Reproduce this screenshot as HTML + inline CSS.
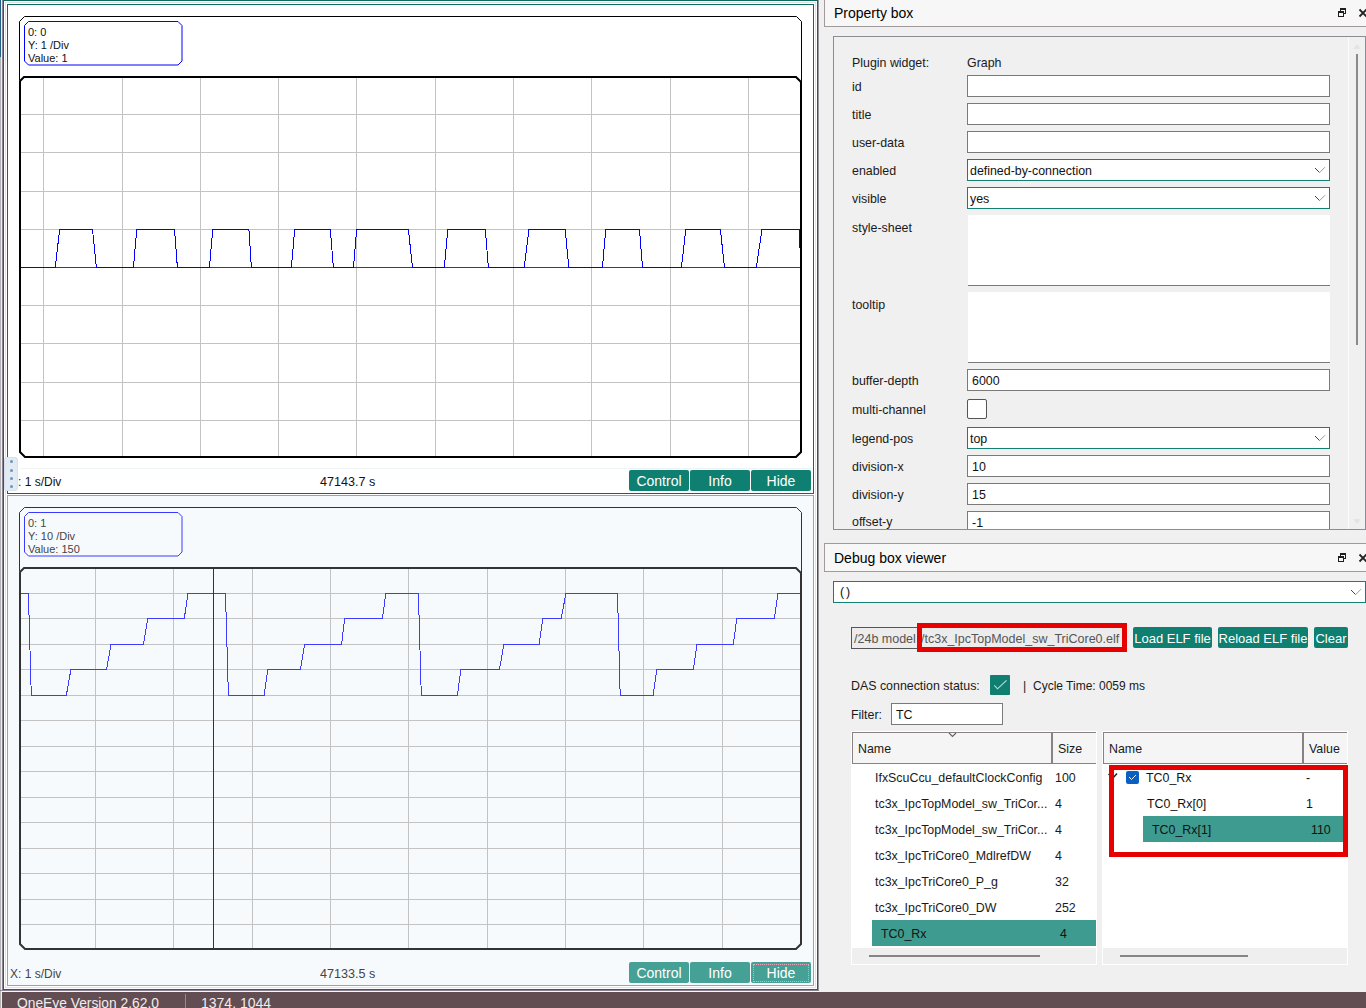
<!DOCTYPE html>
<html><head><meta charset="utf-8"><style>
*{margin:0;padding:0;box-sizing:border-box}
html,body{width:1366px;height:1008px;overflow:hidden;background:#f0f0f0;position:relative;font-family:"Liberation Sans",sans-serif}
div,span,svg{position:absolute}
.t{line-height:1;white-space:nowrap}
</style></head><body><div style="left:0px;top:0px;width:1px;height:57px;background:#1f5f86"></div>
<div style="left:0px;top:57px;width:1px;height:951px;background:#b4b4b4"></div>
<div style="left:1px;top:0px;width:1px;height:992px;background:#f2eeee"></div>
<div style="left:2px;top:0px;width:1px;height:991px;background:#8c8494"></div>
<div style="left:3px;top:0px;width:815px;height:990px;border:1px solid #0f6a5e;background:#ffffff"></div>
<div style="left:5px;top:2px;width:811px;height:986px;border:1px solid #e2e2e2"></div>
<div style="left:818px;top:0px;width:1px;height:992px;background:#9c98a0"></div>
<div style="left:0px;top:990px;width:819px;height:1px;background:#8c8494"></div>
<div style="left:1px;top:991px;width:818px;height:1px;background:#f6f6f6"></div>
<div style="left:7px;top:4px;width:807px;height:490px;border:1px solid #0f6a5e;background:#ffffff"></div>
<svg style="left:0;top:0" width="1366" height="1008" viewBox="0 0 1366 1008"><path d="M19.5 21.5 L24.5 16.5 L796.5 16.5 L801.5 21.5 L801.5 82" fill="none" stroke="#000000" stroke-width="1"/><path d="M19.5 21.5 L19.5 80" fill="none" stroke="#000000" stroke-width="1"/><path d="M24.5 25.5 L28.5 21.5 L178 21.5 L182 25.5 L182 61 L178 65 L28.5 65 L24.5 61 Z" fill="none" stroke="#0000ff" stroke-width="1"/><line x1="43.5" y1="77" x2="43.5" y2="457" stroke="#c3c3c3" stroke-width="1"/><line x1="122.5" y1="77" x2="122.5" y2="457" stroke="#c3c3c3" stroke-width="1"/><line x1="200.5" y1="77" x2="200.5" y2="457" stroke="#c3c3c3" stroke-width="1"/><line x1="278.5" y1="77" x2="278.5" y2="457" stroke="#c3c3c3" stroke-width="1"/><line x1="356.5" y1="77" x2="356.5" y2="457" stroke="#c3c3c3" stroke-width="1"/><line x1="435.5" y1="77" x2="435.5" y2="457" stroke="#c3c3c3" stroke-width="1"/><line x1="513.5" y1="77" x2="513.5" y2="457" stroke="#c3c3c3" stroke-width="1"/><line x1="591.5" y1="77" x2="591.5" y2="457" stroke="#c3c3c3" stroke-width="1"/><line x1="670.5" y1="77" x2="670.5" y2="457" stroke="#c3c3c3" stroke-width="1"/><line x1="748.5" y1="77" x2="748.5" y2="457" stroke="#c3c3c3" stroke-width="1"/><line x1="21" y1="114.5" x2="800" y2="114.5" stroke="#c3c3c3" stroke-width="1"/><line x1="21" y1="152.5" x2="800" y2="152.5" stroke="#c3c3c3" stroke-width="1"/><line x1="21" y1="191.5" x2="800" y2="191.5" stroke="#c3c3c3" stroke-width="1"/><line x1="21" y1="229.5" x2="800" y2="229.5" stroke="#c3c3c3" stroke-width="1"/><line x1="21" y1="267.5" x2="800" y2="267.5" stroke="#c3c3c3" stroke-width="1"/><line x1="21" y1="305.5" x2="800" y2="305.5" stroke="#c3c3c3" stroke-width="1"/><line x1="21" y1="343.5" x2="800" y2="343.5" stroke="#c3c3c3" stroke-width="1"/><line x1="21" y1="382.5" x2="800" y2="382.5" stroke="#c3c3c3" stroke-width="1"/><line x1="21" y1="420.5" x2="800" y2="420.5" stroke="#c3c3c3" stroke-width="1"/><line x1="21" y1="267.5" x2="800" y2="267.5" stroke="#00604f" stroke-width="1"/><polyline points="21.0,267.5 55.3,267.5 59.6,229.5 92.5,229.5 96.4,267.5 133.4,267.5 136.8,229.5 174.5,229.5 177.4,267.5 209.4,267.5 212.8,229.5 248.9,229.5 251.4,267.5 291.4,267.5 294.7,229.5 330.3,229.5 333.4,267.5 353.5,267.5 356.6,229.5 408.4,229.5 412.5,267.5 444.3,267.5 447.8,229.5 485.3,229.5 488.4,267.5 524.2,267.5 528.9,229.5 565.2,229.5 568.8,267.5 602.4,267.5 605.8,229.5 639.5,229.5 642.5,267.5 681.4,267.5 685.8,229.5 720.4,229.5 724.5,267.5 756.3,267.5 762.0,229.5 799.5,229.5 799.5,248.0" fill="none" stroke="#0000ff" stroke-width="1" shape-rendering="crispEdges"/><path d="M20 81 L24 77 L796 77 L801 82 L801 452 L796 457 L25 457 L20 452 Z" fill="none" stroke="#000000" stroke-width="2"/></svg>
<span class="t" style="left:28px;top:27px;font-size:11px;color:#111111;">0: 0</span>
<span class="t" style="left:28px;top:40px;font-size:11px;color:#111111;">Y: 1 /Div</span>
<span class="t" style="left:28px;top:53px;font-size:11px;color:#111111;">Value: 1</span>
<div style="left:20px;top:468px;width:793px;height:1px;background:#eef3f3"></div>
<span class="t" style="left:10px;top:476px;font-size:12px;color:#111111;">X: 1 s/Div</span>
<span class="t" style="left:320px;top:476px;font-size:12.6px;color:#111111;">47143.7 s</span>
<div style="left:629px;top:470px;width:60px;height:21px;background:#0e7f70;border-radius:2px;color:#fff;font-size:14px;line-height:1;padding-top:4px;text-align:center">Control</div>
<div style="left:690px;top:470px;width:60px;height:21px;background:#0e7f70;border-radius:2px;color:#fff;font-size:14px;line-height:1;padding-top:4px;text-align:center">Info</div>
<div style="left:751px;top:470px;width:60px;height:21px;background:#0e7f70;border-radius:2px;color:#fff;font-size:14px;line-height:1;padding-top:4px;text-align:center">Hide</div>
<div style="left:4px;top:457px;width:14px;height:34px;background:#e2eaf3;border:1px solid #d8e0ea;border-radius:3px"></div>
<div style="left:9.5px;top:460.1px;width:3px;height:3px;border-radius:50%;background:#6e96bc"></div>
<div style="left:9.5px;top:468.6px;width:3px;height:3px;border-radius:50%;background:#6e96bc"></div>
<div style="left:9.5px;top:476.7px;width:3px;height:3px;border-radius:50%;background:#6e96bc"></div>
<div style="left:9.5px;top:484.8px;width:3px;height:3px;border-radius:50%;background:#6e96bc"></div>
<div style="left:7px;top:495px;width:807px;height:491px;border:1px solid #7ba6e9;background:#f7fafd"></div>
<svg style="left:0;top:0" width="1366" height="1008" viewBox="0 0 1366 1008"><path d="M19.5 512.5 L24.5 507.5 L796.5 507.5 L801.5 512.5 L801.5 573" fill="none" stroke="#333333" stroke-width="1"/><path d="M19.5 512.5 L19.5 571" fill="none" stroke="#333333" stroke-width="1"/><path d="M24.5 516.5 L28.5 512.5 L178 512.5 L182 516.5 L182 552 L178 556 L28.5 556 L24.5 552 Z" fill="none" stroke="#3a3aff" stroke-width="1"/><line x1="95.5" y1="568" x2="95.5" y2="948" stroke="#c3c3c3" stroke-width="1"/><line x1="173.5" y1="568" x2="173.5" y2="948" stroke="#c3c3c3" stroke-width="1"/><line x1="252.5" y1="568" x2="252.5" y2="948" stroke="#c3c3c3" stroke-width="1"/><line x1="330.5" y1="568" x2="330.5" y2="948" stroke="#c3c3c3" stroke-width="1"/><line x1="408.5" y1="568" x2="408.5" y2="948" stroke="#c3c3c3" stroke-width="1"/><line x1="487.5" y1="568" x2="487.5" y2="948" stroke="#c3c3c3" stroke-width="1"/><line x1="565.5" y1="568" x2="565.5" y2="948" stroke="#c3c3c3" stroke-width="1"/><line x1="643.5" y1="568" x2="643.5" y2="948" stroke="#c3c3c3" stroke-width="1"/><line x1="722.5" y1="568" x2="722.5" y2="948" stroke="#c3c3c3" stroke-width="1"/><line x1="21" y1="593.5" x2="800" y2="593.5" stroke="#c3c3c3" stroke-width="1"/><line x1="21" y1="618.5" x2="800" y2="618.5" stroke="#c3c3c3" stroke-width="1"/><line x1="21" y1="644.5" x2="800" y2="644.5" stroke="#c3c3c3" stroke-width="1"/><line x1="21" y1="669.5" x2="800" y2="669.5" stroke="#c3c3c3" stroke-width="1"/><line x1="21" y1="695.5" x2="800" y2="695.5" stroke="#c3c3c3" stroke-width="1"/><line x1="21" y1="720.5" x2="800" y2="720.5" stroke="#c3c3c3" stroke-width="1"/><line x1="21" y1="746.5" x2="800" y2="746.5" stroke="#c3c3c3" stroke-width="1"/><line x1="21" y1="771.5" x2="800" y2="771.5" stroke="#c3c3c3" stroke-width="1"/><line x1="21" y1="797.5" x2="800" y2="797.5" stroke="#c3c3c3" stroke-width="1"/><line x1="21" y1="822.5" x2="800" y2="822.5" stroke="#c3c3c3" stroke-width="1"/><line x1="21" y1="848.5" x2="800" y2="848.5" stroke="#c3c3c3" stroke-width="1"/><line x1="21" y1="873.5" x2="800" y2="873.5" stroke="#c3c3c3" stroke-width="1"/><line x1="21" y1="899.5" x2="800" y2="899.5" stroke="#c3c3c3" stroke-width="1"/><line x1="21" y1="924.5" x2="800" y2="924.5" stroke="#c3c3c3" stroke-width="1"/><polyline points="21.0,593.5 28.4,593.5 31.3,695.5 66.3,695.5 70.9,669.5 106.5,669.5 111.0,644.5 143.4,644.5 147.8,618.5 184.3,618.5 187.9,593.5 225.5,593.5 228.4,695.5 264.1,695.5 267.8,669.5 300.4,669.5 304.7,644.5 341.6,644.5 344.6,618.5 382.4,618.5 385.8,593.5 418.4,593.5 421.3,695.5 457.4,695.5 460.9,669.5 499.4,669.5 503.9,644.5 539.2,644.5 542.7,618.5 561.2,618.5 565.9,593.5 617.5,593.5 620.2,695.5 653.2,695.5 656.7,669.5 693.4,669.5 697.0,644.5 733.3,644.5 736.8,618.5 774.3,618.5 778.0,593.5 800.0,593.5" fill="none" stroke="#3c3cff" stroke-width="1" shape-rendering="crispEdges"/><line x1="213.5" y1="568" x2="213.5" y2="948" stroke="#333" stroke-width="1"/><path d="M20 572 L24 568 L796 568 L801 573 L801 944 L796 949 L25 949 L20 944 Z" fill="none" stroke="#333333" stroke-width="2"/></svg>
<span class="t" style="left:28px;top:518px;font-size:11px;color:#444444;">0: 1</span>
<span class="t" style="left:28px;top:531px;font-size:11px;color:#444444;">Y: 10 /Div</span>
<span class="t" style="left:28px;top:544px;font-size:11px;color:#444444;">Value: 150</span>
<span class="t" style="left:10px;top:968px;font-size:12px;color:#444444;">X: 1 s/Div</span>
<span class="t" style="left:320px;top:968px;font-size:12.6px;color:#444444;">47133.5 s</span>
<div style="left:629px;top:962px;width:60px;height:21px;background:#45a096;border-radius:2px;color:#fff;font-size:14px;line-height:1;padding-top:4px;text-align:center">Control</div>
<div style="left:690px;top:962px;width:60px;height:21px;background:#45a096;border-radius:2px;color:#fff;font-size:14px;line-height:1;padding-top:4px;text-align:center">Info</div>
<div style="left:751px;top:962px;width:60px;height:21px;background:#45a096;border-radius:2px;color:#fff;font-size:14px;line-height:1;padding-top:4px;text-align:center">Hide</div>
<div style="left:753px;top:964px;width:56px;height:18px;border:1px dotted #e8a8b8"></div>
<div style="left:824px;top:-1px;width:547px;height:28px;border:1px solid #a09a9a;background:#f7f7f7"></div>
<span class="t" style="left:834px;top:6px;font-size:14px;color:#000;">Property box</span>
<svg style="left:1338px;top:8px" width="8" height="9" shape-rendering="crispEdges"><g fill="#1e1e1e"><rect x="2" y="0" width="6" height="2"/><rect x="7" y="0" width="1" height="6"/><rect x="6" y="5" width="2" height="1"/><rect x="2" y="0" width="1" height="3"/><rect x="0" y="3" width="6" height="2"/><rect x="0" y="3" width="1" height="6"/><rect x="5" y="3" width="1" height="6"/><rect x="0" y="8" width="6" height="1"/></g></svg>
<svg style="left:1358px;top:8px" width="10" height="10" viewBox="0 0 10 10"><path d="M1.5 1.5 L8.5 8.5 M8.5 1.5 L1.5 8.5" stroke="#222" stroke-width="1.8"/></svg>
<div style="left:833px;top:36px;width:533px;height:494px;border:1px solid #8a8d94;background:#f0f0f0"></div>
<div style="left:1348px;top:37px;width:17px;height:492px;background:#f0f0f0;border-left:1px solid #fcfcfc"></div>
<div style="left:1356px;top:54px;width:2px;height:291px;background:#8a8a8a"></div>
<svg style="left:1350px;top:40px" width="14" height="12"><path d="M3 9 L7 4 L11 9 Z" fill="#e4e4e4"/></svg>
<svg style="left:1350px;top:516px" width="14" height="12"><path d="M3 3 L7 8 L11 3 Z" fill="#e4e4e4"/></svg>
<span class="t" style="left:852px;top:57px;font-size:12.4px;color:#1a1a1a;">Plugin widget:</span>
<span class="t" style="left:967px;top:57px;font-size:12.4px;color:#1a1a1a;">Graph</span>
<span class="t" style="left:852px;top:81px;font-size:12.4px;color:#1a1a1a;">id</span>
<div style="left:967px;top:75px;width:363px;height:22px;border:1px solid #7a7a7a;background:#fff"></div>
<span class="t" style="left:852px;top:109px;font-size:12.4px;color:#1a1a1a;">title</span>
<div style="left:967px;top:103px;width:363px;height:22px;border:1px solid #7a7a7a;background:#fff"></div>
<span class="t" style="left:852px;top:137px;font-size:12.4px;color:#1a1a1a;">user-data</span>
<div style="left:967px;top:131px;width:363px;height:22px;border:1px solid #7a7a7a;background:#fff"></div>
<span class="t" style="left:852px;top:165px;font-size:12.4px;color:#1a1a1a;">enabled</span>
<div style="left:967px;top:159px;width:363px;height:22px;border:1px solid #138074;background:#fff"></div>
<span class="t" style="left:970px;top:165px;font-size:12.4px;color:#111;">defined-by-connection</span>
<svg style="left:1314px;top:166px" width="14" height="9"><path d="M1 2 L5.6 6.6" fill="none" stroke="#444" stroke-width="1"/><path d="M5.6 6.6 L11 1.2" fill="none" stroke="#999" stroke-width="1"/></svg>
<span class="t" style="left:852px;top:193px;font-size:12.4px;color:#1a1a1a;">visible</span>
<div style="left:967px;top:187px;width:363px;height:22px;border:1px solid #138074;background:#fff"></div>
<span class="t" style="left:970px;top:193px;font-size:12.4px;color:#111;">yes</span>
<svg style="left:1314px;top:194px" width="14" height="9"><path d="M1 2 L5.6 6.6" fill="none" stroke="#444" stroke-width="1"/><path d="M5.6 6.6 L11 1.2" fill="none" stroke="#999" stroke-width="1"/></svg>
<span class="t" style="left:852px;top:222px;font-size:12.4px;color:#1a1a1a;">style-sheet</span>
<div style="left:968px;top:215px;width:362px;height:71px;background:#fff;border-bottom:1px solid #7a7a7a"></div>
<span class="t" style="left:852px;top:299px;font-size:12.4px;color:#1a1a1a;">tooltip</span>
<div style="left:968px;top:292px;width:362px;height:71px;background:#fff;border-bottom:1px solid #7a7a7a"></div>
<span class="t" style="left:852px;top:375px;font-size:12.4px;color:#1a1a1a;">buffer-depth</span>
<div style="left:967px;top:369px;width:363px;height:22px;border:1px solid #7a7a7a;background:#fff"></div>
<span class="t" style="left:972px;top:375px;font-size:12.4px;color:#111;">6000</span>
<span class="t" style="left:852px;top:404px;font-size:12.4px;color:#1a1a1a;">multi-channel</span>
<div style="left:967px;top:399px;width:20px;height:20px;border:1px solid #555;border-radius:2px;background:#fff"></div>
<span class="t" style="left:852px;top:433px;font-size:12.4px;color:#1a1a1a;">legend-pos</span>
<div style="left:967px;top:427px;width:363px;height:22px;border:1px solid #138074;background:#fff"></div>
<span class="t" style="left:970px;top:433px;font-size:12.4px;color:#111;">top</span>
<svg style="left:1314px;top:434px" width="14" height="9"><path d="M1 2 L5.6 6.6" fill="none" stroke="#444" stroke-width="1"/><path d="M5.6 6.6 L11 1.2" fill="none" stroke="#999" stroke-width="1"/></svg>
<span class="t" style="left:852px;top:461px;font-size:12.4px;color:#1a1a1a;">division-x</span>
<div style="left:967px;top:455px;width:363px;height:22px;border:1px solid #7a7a7a;background:#fff"></div>
<span class="t" style="left:972px;top:461px;font-size:12.4px;color:#111;">10</span>
<span class="t" style="left:852px;top:489px;font-size:12.4px;color:#1a1a1a;">division-y</span>
<div style="left:967px;top:483px;width:363px;height:22px;border:1px solid #7a7a7a;background:#fff"></div>
<span class="t" style="left:972px;top:489px;font-size:12.4px;color:#111;">15</span>
<div style="left:834px;top:505px;width:514px;height:24px;overflow:hidden"><span class="t" style="left:18px;top:11px;font-size:12.4px;color:#1a1a1a">offset-y</span><div style="left:133px;top:6px;width:363px;height:30px;border:1px solid #7a7a7a;background:#fff"></div><span class="t" style="left:138px;top:12px;font-size:12.4px;color:#111">-1</span></div>
<div style="left:824px;top:543px;width:547px;height:29px;border:1px solid #a09a9a;background:#f7f7f7"></div>
<span class="t" style="left:834px;top:551px;font-size:14px;color:#000;">Debug box viewer</span>
<svg style="left:1338px;top:553px" width="8" height="9" shape-rendering="crispEdges"><g fill="#1e1e1e"><rect x="2" y="0" width="6" height="2"/><rect x="7" y="0" width="1" height="6"/><rect x="6" y="5" width="2" height="1"/><rect x="2" y="0" width="1" height="3"/><rect x="0" y="3" width="6" height="2"/><rect x="0" y="3" width="1" height="6"/><rect x="5" y="3" width="1" height="6"/><rect x="0" y="8" width="6" height="1"/></g></svg>
<svg style="left:1358px;top:553px" width="10" height="10" viewBox="0 0 10 10"><path d="M1.5 1.5 L8.5 8.5 M8.5 1.5 L1.5 8.5" stroke="#222" stroke-width="1.8"/></svg>
<div style="left:833px;top:581px;width:533px;height:22px;border:1px solid #138074;background:#fff"></div>
<span class="t" style="left:840px;top:586px;font-size:12.4px;color:#111;">(</span>
<span class="t" style="left:846px;top:586px;font-size:12.4px;color:#111;">)</span>
<svg style="left:1350px;top:588px" width="14" height="9"><path d="M1 2 L5.6 6.6" fill="none" stroke="#444" stroke-width="1"/><path d="M5.6 6.6 L11 1.2" fill="none" stroke="#999" stroke-width="1"/></svg>
<div style="left:851px;top:627px;width:275px;height:22px;border:1px solid #555;background:#ececec"></div>
<span class="t" style="left:854px;top:633px;font-size:12.5px;color:#555;">/24b model</span>
<span class="t" style="left:921px;top:633px;font-size:12.5px;color:#555;">/tc3x_IpcTopModel_sw_TriCore0.elf</span>
<div style="left:917px;top:623px;width:210px;height:29px;border:5px solid #e60000"></div>
<div style="left:1133px;top:627px;width:79px;height:21px;background:#0e7f70;border-radius:2px;color:#fff;font-size:13px;line-height:1;padding-top:5px;text-align:center;overflow:hidden;white-space:nowrap">Load ELF file</div>
<div style="left:1218px;top:627px;width:90px;height:21px;background:#0e7f70;border-radius:2px;color:#fff;font-size:13px;line-height:1;padding-top:5px;text-align:center;overflow:hidden;white-space:nowrap">Reload ELF file</div>
<div style="left:1314px;top:627px;width:34px;height:21px;background:#0e7f70;border-radius:2px;color:#fff;font-size:13px;line-height:1;padding-top:5px;text-align:center;overflow:hidden;white-space:nowrap">Clear</div>
<span class="t" style="left:851px;top:680px;font-size:12.4px;color:#1a1a1a;">DAS connection status:</span>
<div style="left:990px;top:675px;width:20px;height:20px;background:#0e7f70;border-radius:1px"></div>
<svg style="left:990px;top:675px" width="20" height="20"><path d="M4.3 10.3 L7.5 13.8 L16.5 5.3" fill="none" stroke="#c4dcdc" stroke-width="1.1"/></svg>
<span class="t" style="left:1023px;top:680px;font-size:12.4px;color:#1a1a1a;">|</span>
<span class="t" style="left:1033px;top:680px;font-size:12px;color:#1a1a1a;">Cycle Time: 0059 ms</span>
<span class="t" style="left:851px;top:709px;font-size:12.4px;color:#1a1a1a;">Filter:</span>
<div style="left:891px;top:703px;width:112px;height:22px;border:1px solid #7a7a7a;background:#fff"></div>
<span class="t" style="left:896px;top:709px;font-size:12.4px;color:#111;">TC</span>
<div style="left:851px;top:731px;width:246px;height:234px;background:#fff"></div>
<div style="left:852px;top:732px;width:244px;height:32px;background:#f5f5f5;border-top:1px solid #8a8282;border-bottom:1px solid #8a8282;border-left:1px solid #8a8282"></div>
<div style="left:1051px;top:733px;width:2px;height:30px;background:#8a8282"></div>
<span class="t" style="left:858px;top:743px;font-size:12.4px;color:#1a1a1a;">Name</span>
<span class="t" style="left:1058px;top:743px;font-size:12.4px;color:#1a1a1a;">Size</span>
<div style="left:852px;top:948px;width:244px;height:16px;background:#efefef"></div>
<svg style="left:946px;top:732px" width="14" height="8"><path d="M3 1 L6.5 4.5 L10 1" fill="none" stroke="#666" stroke-width="1.2"/></svg>
<div style="left:869px;top:955px;width:171px;height:2px;background:#858585"></div>
<span class="t" style="left:875px;top:772px;font-size:12.4px;color:#1a1a1a;">IfxScuCcu_defaultClockConfig</span>
<span class="t" style="left:1055px;top:772px;font-size:12.4px;color:#1a1a1a;">100</span>
<span class="t" style="left:875px;top:798px;font-size:12.4px;color:#1a1a1a;">tc3x_IpcTopModel_sw_TriCor...</span>
<span class="t" style="left:1055px;top:798px;font-size:12.4px;color:#1a1a1a;">4</span>
<span class="t" style="left:875px;top:824px;font-size:12.4px;color:#1a1a1a;">tc3x_IpcTopModel_sw_TriCor...</span>
<span class="t" style="left:1055px;top:824px;font-size:12.4px;color:#1a1a1a;">4</span>
<span class="t" style="left:875px;top:850px;font-size:12.4px;color:#1a1a1a;">tc3x_IpcTriCore0_MdlrefDW</span>
<span class="t" style="left:1055px;top:850px;font-size:12.4px;color:#1a1a1a;">4</span>
<span class="t" style="left:875px;top:876px;font-size:12.4px;color:#1a1a1a;">tc3x_IpcTriCore0_P_g</span>
<span class="t" style="left:1055px;top:876px;font-size:12.4px;color:#1a1a1a;">32</span>
<span class="t" style="left:875px;top:902px;font-size:12.4px;color:#1a1a1a;">tc3x_IpcTriCore0_DW</span>
<span class="t" style="left:1055px;top:902px;font-size:12.4px;color:#1a1a1a;">252</span>
<div style="left:872px;top:920px;width:224px;height:26px;background:#3d9b8f"></div>
<span class="t" style="left:881px;top:928px;font-size:12.4px;color:#111;">TC0_Rx</span>
<span class="t" style="left:1060px;top:928px;font-size:12.4px;color:#111;">4</span>
<div style="left:1102px;top:731px;width:246px;height:234px;background:#fff"></div>
<div style="left:1103px;top:732px;width:244px;height:32px;background:#f5f5f5;border-top:1px solid #8a8282;border-bottom:1px solid #8a8282;border-left:1px solid #8a8282"></div>
<div style="left:1302px;top:733px;width:2px;height:30px;background:#8a8282"></div>
<span class="t" style="left:1109px;top:743px;font-size:12.4px;color:#1a1a1a;">Name</span>
<span class="t" style="left:1309px;top:743px;font-size:12.4px;color:#1a1a1a;">Value</span>
<div style="left:1103px;top:948px;width:244px;height:16px;background:#efefef"></div>
<div style="left:1120px;top:955px;width:128px;height:2px;background:#858585"></div>
<span class="t" style="left:1146px;top:772px;font-size:12.4px;color:#111;">TC0_Rx</span>
<span class="t" style="left:1306px;top:772px;font-size:12.4px;color:#111;">-</span>
<div style="left:1126px;top:771px;width:13px;height:13px;background:#0a5fc2;border-radius:2px"></div>
<svg style="left:1126px;top:771px" width="13" height="13"><path d="M3 6 L5.5 8.5 L10 4" fill="none" stroke="#e8f0fa" stroke-width="1"/></svg>
<span class="t" style="left:1147px;top:798px;font-size:12.4px;color:#111;">TC0_Rx[0]</span>
<span class="t" style="left:1306px;top:798px;font-size:12.4px;color:#111;">1</span>
<div style="left:1143px;top:816px;width:205px;height:26px;background:#3d9b8f"></div>
<span class="t" style="left:1152px;top:824px;font-size:12.4px;color:#111;">TC0_Rx[1]</span>
<span class="t" style="left:1311px;top:824px;font-size:12.4px;color:#111;">110</span>
<svg style="left:1100px;top:766px" width="24" height="18"><path d="M8.5 8 L13 12 L17 7.5" fill="none" stroke="#222" stroke-width="1.5"/></svg>
<div style="left:1109px;top:765px;width:239px;height:92px;border:5px solid #e60000"></div>
<div style="left:2px;top:992px;width:1365px;height:17px;background:#624d52"></div>
<span class="t" style="left:17px;top:997px;font-size:13.8px;color:#f2ecec;">OneEye Version 2.62.0</span>
<div style="left:185px;top:994px;width:1px;height:15px;background:#9a8a8e"></div>
<span class="t" style="left:201px;top:996px;font-size:14px;color:#f2ecec;">1374, 1044</span></body></html>
